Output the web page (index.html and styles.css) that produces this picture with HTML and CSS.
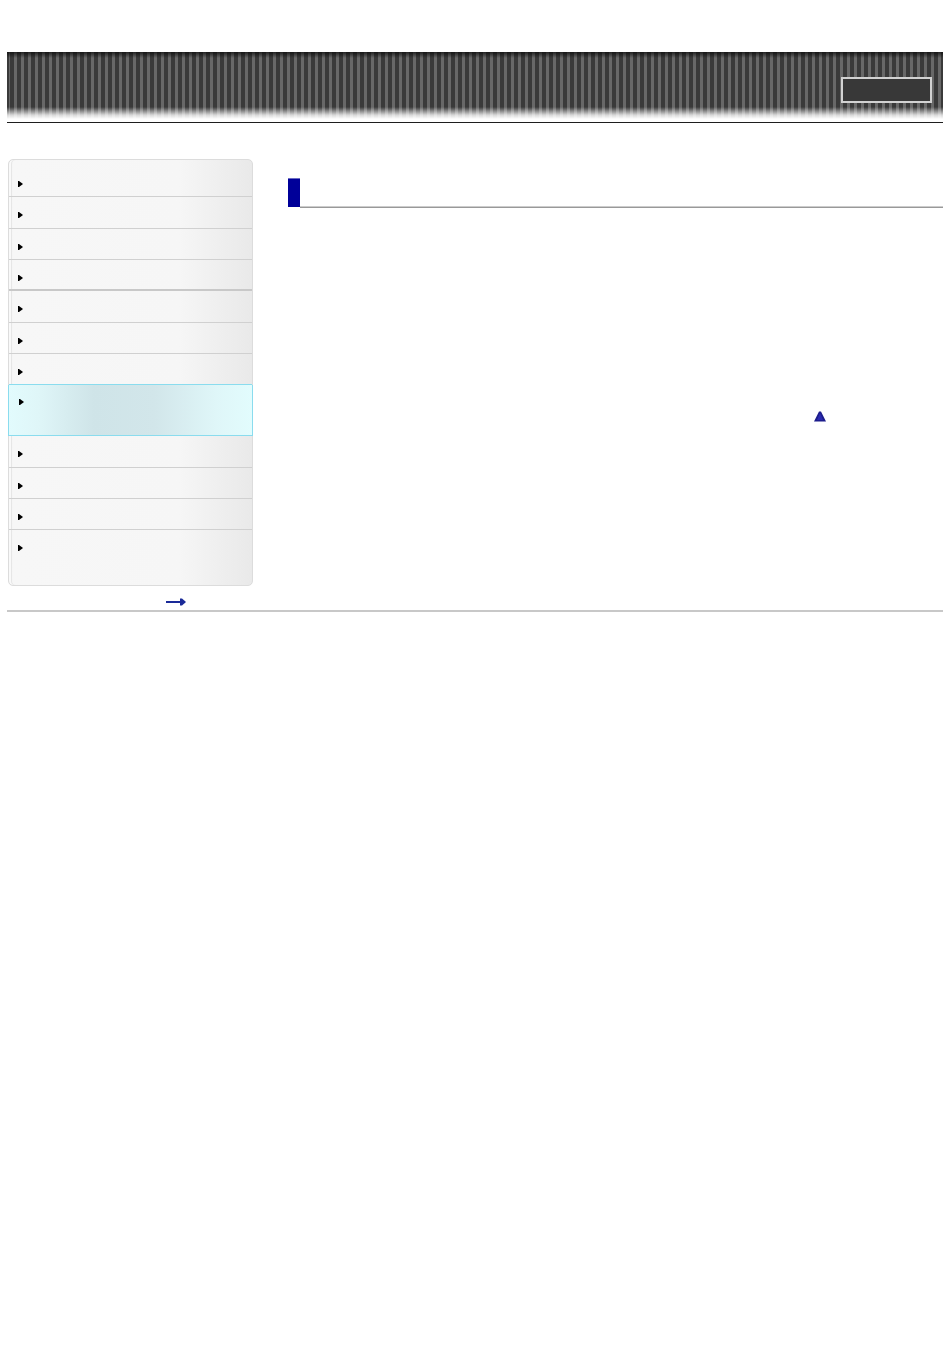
FILE: index.html
```html
<!DOCTYPE html>
<html lang="en">
  <head>
    <meta charset="UTF-8" />
    <meta name="viewport" content="width=device-width, initial-scale=1.0" />
    <title>Help Guide</title>
    <link rel="stylesheet" href="styles.css">
  </head>
  <body>
    <div class="page">
      <header class="header">
        <div class="search-box"></div>
      </header>

      <div class="content">
        <nav class="sidebar">
          <ul class="nav-list">
            <li class="nav-item"><span class="bullet"></span></li>
            <li class="nav-item"><span class="bullet"></span></li>
            <li class="nav-item"><span class="bullet"></span></li>
            <li class="nav-item group-end"><span class="bullet"></span></li>
            <li class="nav-item"><span class="bullet"></span></li>
            <li class="nav-item"><span class="bullet"></span></li>
            <li class="nav-item before-selected"><span class="bullet"></span></li>
            <li class="nav-item tall selected"><span class="bullet"></span></li>
            <li class="nav-item"><span class="bullet"></span></li>
            <li class="nav-item"><span class="bullet"></span></li>
            <li class="nav-item"><span class="bullet"></span></li>
            <li class="nav-item tall last"><span class="bullet"></span></li>
          </ul>
        </nav>

        <main class="main">
          <div class="title">
            <span class="title-mark"></span>
            <h1 class="title-text"></h1>
          </div>
          <div class="back-top">
            <svg width="12" height="11" viewBox="0 0 12 11">
              <path d="M5 0.5h2L12 10.5H0z" fill="#1c1c8c" />
              <path d="M6 2L9 9H3z" fill="#2a2ab0" />
            </svg>
          </div>
        </main>
      </div>

      <div class="next-link">
        <svg width="20" height="8" viewBox="0 0 20 8">
          <path d="M0 3h14v2H0z" fill="#1a2a98" />
          <path d="M14 0.5h2l4 3.5-4 3.5h-2z" fill="#1a2a98" />
        </svg>
      </div>

      <div class="footer-line"></div>
    </div>
  </body>
</html>
```

FILE: styles.css
```css
* {
  box-sizing: border-box;
  margin: 0;
  padding: 0;
}

body {
  background: #fff;
  font-family: "Liberation Sans", Arial, sans-serif;
  font-size: 12px;
  color: #000;
}

.page {
  padding: 52px 7px 0 7px;
}

/* striped banner */
.header {
  height: 71px;
  display: flex;
  justify-content: flex-end;
  align-items: flex-start;
  padding: 25px 11px 0 0;
  border-bottom: 1px solid #1e1e1e;
  background:
    linear-gradient(
      to bottom,
      rgba(10, 10, 10, 0.75) 0,
      rgba(10, 10, 10, 0) 6px,
      rgba(255, 255, 255, 0) 55px,
      rgba(255, 255, 255, 0.8) 63px,
      #fff 67px,
      #fff 70px
    ),
    repeating-linear-gradient(
      to right,
      #3a3a3a 0,
      #3a3a3a 4px,
      #686868 4px,
      #686868 7px
    );
  background-position: 0 0, 3px 0;
}

.search-box {
  width: 91px;
  height: 26px;
  border: 2px solid #d2d2d2;
  background: #383838;
}

.content {
  display: flex;
  align-items: flex-start;
  margin-top: 36px;
}

/* left menu */
.sidebar {
  width: 245px;
  margin-left: 1px;
  padding: 6px 0 6px 0;
  border: 1px solid #dcdcdc;
  border-radius: 5px;
  background: linear-gradient(
    to right,
    #ececec 0,
    #f7f7f7 4px,
    #f6f6f6 70%,
    #e9e9e9 100%
  );
  box-shadow: inset 2px 0 0 #f9f9f9, inset 3px 0 0 #e6e6e6;
}

.nav-list {
  list-style: none;
}

.nav-item {
  position: relative;
  height: 31.33px;
  padding: 15px 0 0 10px;
  border-bottom: 1px solid #d0d0d0;
}

.nav-item.group-end {
  border-bottom: 2px solid #c8c8c8;
}

.nav-item.before-selected {
  border-bottom-color: #8adcee;
}

.nav-item.tall {
  height: 49px;
}

.nav-item.last {
  border-bottom: none;
}

.nav-item.selected {
  margin: 0 -1px;
  height: 51px;
  padding: 14px 0 0 11px;
  border: 1px solid #8adcee;
  border-top: none;
  background: linear-gradient(
    to right,
    #e2fbfd 0,
    #dff6f8 12%,
    #cfe4e8 35%,
    #d2e6ea 60%,
    #dff6f8 85%,
    #e2fcfd 100%
  );
}

.bullet {
  display: block;
  width: 0;
  height: 0;
  border-left: 4px solid #000;
  border-top: 3px solid transparent;
  border-bottom: 3px solid transparent;
  box-shadow: -1px 0 0 #000;
}

/* main column */
.main {
  flex: 1;
  margin-left: 35px;
  padding-top: 19px;
}

.title {
  display: flex;
  height: 30px;
}

.title-mark {
  width: 12px;
  height: 29px;
  background: #000099;
  border-top: 1px solid #6b6bc4;
}

.title-text {
  flex: 1;
  height: 30px;
  background: linear-gradient(
    to bottom,
    transparent 28px,
    #cccccc 28px,
    #cccccc 29px,
    #999999 29px
  );
}

.back-top {
  margin-top: 203px;
  padding-left: 526px;
  height: 12px;
}

.back-top svg {
  display: block;
}

.next-link {
  padding: 12px 0 0 159px;
  height: 21px;
}

.next-link svg {
  display: block;
}

.footer-line {
  margin-top: 3px;
  height: 2px;
  background: #c8c8c8;
}
```
